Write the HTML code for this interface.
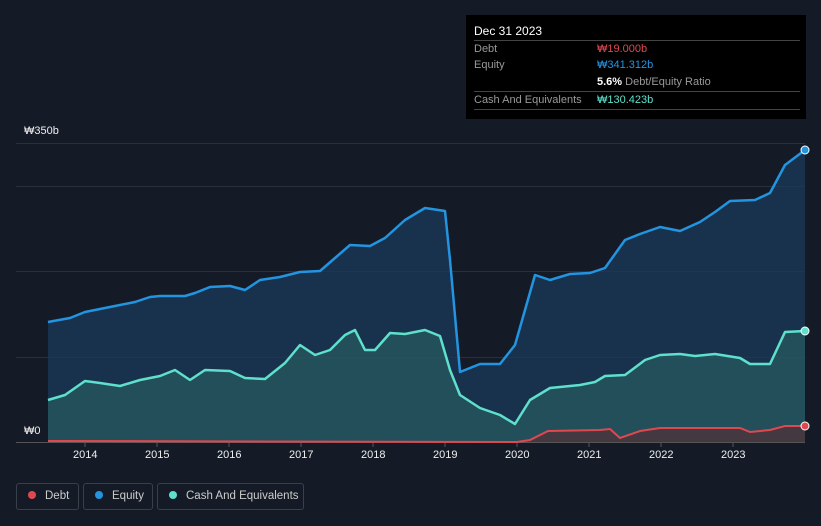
<!DOCTYPE html><html><head><style>
body{margin:0;width:821px;height:526px;background:#151b26;font-family:"Liberation Sans",sans-serif;overflow:hidden;position:relative}
.tt{position:absolute;left:466px;top:15px;width:340px;height:104px;background:#000;color:#fff;font-size:11px}
.row{position:absolute;left:8px;width:326px;border-top:1px solid #444;height:17px;line-height:17px}
.lg{position:absolute;top:483px;height:27px;border:1px solid #3a404a;border-radius:3px;color:#ccc;font-size:11.5px;line-height:25px;box-sizing:border-box;white-space:nowrap}
.dot{display:inline-block;width:8px;height:8px;border-radius:50%;margin:0 9px 0 11px}
.yr{position:absolute;top:449px;color:#eee;font-size:11px}
</style></head><body>
<svg width="821" height="526" style="position:absolute;left:0;top:0">
<g stroke="#2a303b" stroke-width="1"><line x1="16" y1="143.5" x2="805" y2="143.5"/><line x1="16" y1="186.5" x2="805" y2="186.5"/><line x1="16" y1="271.5" x2="805" y2="271.5"/><line x1="16" y1="357.5" x2="805" y2="357.5"/></g>
<line x1="16" y1="442.5" x2="805" y2="442.5" stroke="#555"/>
<path d="M48,322 L70,318 85,312 110,307 135,302 150,297 160,296 185,296 195,293 210,287 230,286 245,290 260,280 280,277 300,272 320,271 335,258 350,245 370,246 385,238 405,220 425,208 445,211 450,260 460,372 480,364 500,364 515,345 525,310 535,275 550,280 570,274 590,273 605,268 625,240 640,234 660,227 680,231 700,222 715,212 730,201 755,200 770,193 785,165 805,150 L805,442 48,442Z" fill="#1a3a5a" fill-opacity="0.75"/>
<path d="M48,400 L65,395 85,381 100,383 120,386 140,380 160,376 175,370 190,380 205,370 230,371 245,378 265,379 285,363 300,345 315,355 330,350 345,335 355,330 365,350 375,350 390,333 405,334 425,330 440,336 450,370 460,395 480,408 500,415 515,424 530,400 550,388 580,385 595,382 605,376 625,375 645,360 660,355 680,354 695,356 715,354 740,358 750,364 770,364 785,332 805,331 L805,442 48,442Z" fill="#2c6464" fill-opacity="0.6"/>
<path d="M48,322 L70,318 85,312 110,307 135,302 150,297 160,296 185,296 195,293 210,287 230,286 245,290 260,280 280,277 300,272 320,271 335,258 350,245 370,246 385,238 405,220 425,208 445,211 450,260 460,372 480,364 500,364 515,345 525,310 535,275 550,280 570,274 590,273 605,268 625,240 640,234 660,227 680,231 700,222 715,212 730,201 755,200 770,193 785,165 805,150" fill="none" stroke="#2394e0" stroke-width="2.5" stroke-linejoin="round"/>
<path d="M48,400 L65,395 85,381 100,383 120,386 140,380 160,376 175,370 190,380 205,370 230,371 245,378 265,379 285,363 300,345 315,355 330,350 345,335 355,330 365,350 375,350 390,333 405,334 425,330 440,336 450,370 460,395 480,408 500,415 515,424 530,400 550,388 580,385 595,382 605,376 625,375 645,360 660,355 680,354 695,356 715,354 740,358 750,364 770,364 785,332 805,331" fill="none" stroke="#5ee0cc" stroke-width="2.5" stroke-linejoin="round"/>
<path d="M48,441 L517,442 530,440 548,431 600,430 610,429 620,438 640,431 660,428 740,428 750,432 770,430 785,426 805,426 L805,442 48,442Z" fill="#5a2a30" fill-opacity="0.6"/>
<path d="M48,441 L517,442 530,440 548,431 600,430 610,429 620,438 640,431 660,428 740,428 750,432 770,430 785,426 805,426" fill="none" stroke="#e04850" stroke-width="2"/>
<circle cx="805" cy="150" r="4" fill="#2394e0" stroke="#fff" stroke-width="1"/>
<circle cx="805" cy="331" r="4" fill="#5ee0cc" stroke="#fff" stroke-width="1"/>
<circle cx="805" cy="426" r="4" fill="#e04850" stroke="#fff" stroke-width="1"/>
<g stroke="#555"><line x1="85" y1="443" x2="85" y2="447"/><line x1="157" y1="443" x2="157" y2="447"/><line x1="229" y1="443" x2="229" y2="447"/><line x1="301" y1="443" x2="301" y2="447"/><line x1="373" y1="443" x2="373" y2="447"/><line x1="445" y1="443" x2="445" y2="447"/><line x1="517" y1="443" x2="517" y2="447"/><line x1="589" y1="443" x2="589" y2="447"/><line x1="661" y1="443" x2="661" y2="447"/><line x1="733" y1="443" x2="733" y2="447"/></g>
</svg>
<div style="position:absolute;left:24px;top:125px;color:#eee;font-size:11px">₩350b</div>
<div style="position:absolute;left:24px;top:425px;color:#eee;font-size:11px">₩0</div>
<div class="yr" style="left:73px">2014</div><div class="yr" style="left:145px">2015</div><div class="yr" style="left:217px">2016</div><div class="yr" style="left:289px">2017</div><div class="yr" style="left:361px">2018</div><div class="yr" style="left:433px">2019</div><div class="yr" style="left:505px">2020</div><div class="yr" style="left:577px">2021</div><div class="yr" style="left:649px">2022</div><div class="yr" style="left:721px">2023</div>
<div class="tt">
<div style="position:absolute;left:8px;top:9px;font-size:12px">Dec 31 2023</div>
<div class="row" style="top:25px;color:#999">Debt<span style="position:absolute;left:123px;color:#e04850">₩19.000b</span></div>
<div class="row" style="top:42px;color:#999;border:none">Equity<span style="position:absolute;left:123px;color:#2394e0">₩341.312b</span></div>
<div class="row" style="top:59px;color:#999;border:none"><span style="position:absolute;left:123px"><b style="color:#fff">5.6%</b> Debt/Equity Ratio</span></div>
<div class="row" style="top:76px;color:#999">Cash And Equivalents<span style="position:absolute;left:123px;color:#5ee0cc">₩130.423b</span></div>
<div class="row" style="top:94px;height:0"></div>
</div>
<div class="lg" style="left:16px;width:63px"><span class="dot" style="background:#e04850"></span>Debt</div>
<div class="lg" style="left:83px;width:70px"><span class="dot" style="background:#2394e0"></span>Equity</div>
<div class="lg" style="left:157px;width:147px"><span class="dot" style="background:#5ee0cc"></span>Cash And Equivalents</div>
</body></html>
